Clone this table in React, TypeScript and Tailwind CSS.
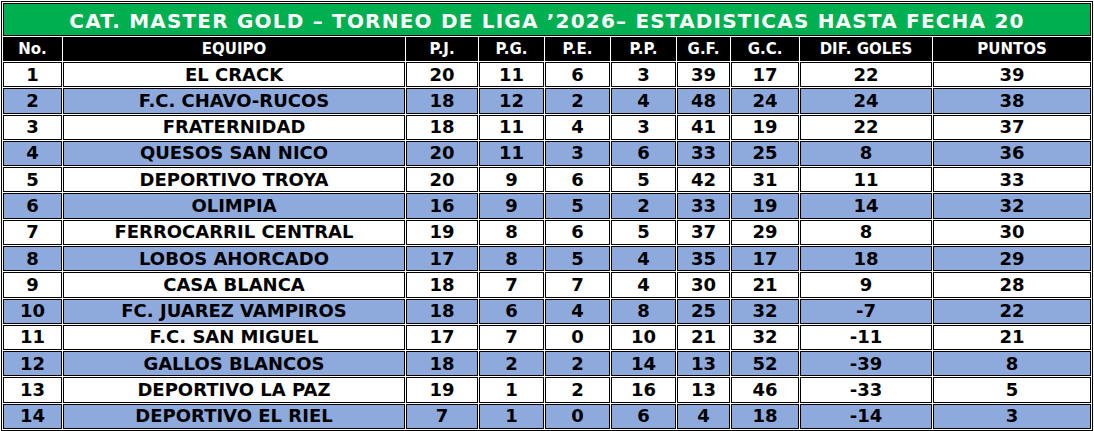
import React from 'react';

type Row = [number, string, number, number, number, number, number, number, number, number];

const rows: Row[] = [
  [1, 'EL CRACK', 20, 11, 6, 3, 39, 17, 22, 39],
  [2, 'F.C. CHAVO-RUCOS', 18, 12, 2, 4, 48, 24, 24, 38],
  [3, 'FRATERNIDAD', 18, 11, 4, 3, 41, 19, 22, 37],
  [4, 'QUESOS SAN NICO', 20, 11, 3, 6, 33, 25, 8, 36],
  [5, 'DEPORTIVO TROYA', 20, 9, 6, 5, 42, 31, 11, 33],
  [6, 'OLIMPIA', 16, 9, 5, 2, 33, 19, 14, 32],
  [7, 'FERROCARRIL CENTRAL', 19, 8, 6, 5, 37, 29, 8, 30],
  [8, 'LOBOS AHORCADO', 17, 8, 5, 4, 35, 17, 18, 29],
  [9, 'CASA BLANCA', 18, 7, 7, 4, 30, 21, 9, 28],
  [10, 'FC. JUAREZ VAMPIROS', 18, 6, 4, 8, 25, 32, -7, 22],
  [11, 'F.C. SAN MIGUEL', 17, 7, 0, 10, 21, 32, -11, 21],
  [12, 'GALLOS BLANCOS', 18, 2, 2, 14, 13, 52, -39, 8],
  [13, 'DEPORTIVO LA PAZ', 19, 1, 2, 16, 13, 46, -33, 5],
  [14, 'DEPORTIVO EL RIEL', 7, 1, 0, 6, 4, 18, -14, 3],
];

const headers = ['No.', 'EQUIPO', 'P.J.', 'P.G.', 'P.E.', 'P.P.', 'G.F.', 'G.C.', 'DIF. GOLES', 'PUNTOS'];

export default function App() {
  return (
    <div className="pt-px pl-px bg-white font-['DejaVu_Sans','Verdana',sans-serif] font-bold">
      <div className="w-[1092px] h-[430px] border border-black p-px bg-white">
        <div className="grid h-[426px] gap-px grid-cols-[59px_342px_72px_65px_65px_65px_53px_68px_132px_158px] grid-rows-[33px_24px_repeat(14,minmax(0,1fr))]">
          {/* title */}
          <div className="col-span-10 bg-[#00b050] border border-black flex items-center justify-center pt-[2px] text-white text-[20px] tracking-[1.2px] leading-none whitespace-nowrap">
            CAT. MASTER GOLD – TORNEO DE LIGA ’2026– ESTADISTICAS HASTA FECHA 20
          </div>

          {headers.map((h) => (
            <div key={h} className="bg-black border border-black flex items-center justify-center text-white text-[15px] leading-none">
              {h}
            </div>
          ))}

          {rows.map((r, i) => {
            const bg = i % 2 === 1 ? 'bg-[#8ea9db]' : 'bg-white';
            return r.map((v, j) => (
              <div
                key={`${i}-${j}`}
                className={`${bg} border border-black flex items-center justify-center text-black text-[18px] leading-none whitespace-nowrap`}
              >
                {v}
              </div>
            ));
          })}
        </div>
      </div>
    </div>
  );
}
